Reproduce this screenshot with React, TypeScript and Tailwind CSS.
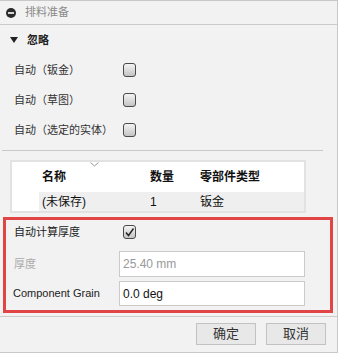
import React from 'react';

const FONT = { fontFamily: '"Liberation Sans", "Noto Sans CJK SC", sans-serif' };

function Box({ checked }: { checked?: boolean }) {
  return (
    <div className="w-[13px] h-[14px] rounded-[3px] border border-[#4a4a4a] bg-gradient-to-b from-[#f4f4f4] to-[#c4c4c4] flex items-center justify-center">
      {checked && (
        <svg width="11" height="11" viewBox="0 0 11 11">
          <path d="M2 5.5 L4.5 8.5 L9.5 1.5" fill="none" stroke="#222" strokeWidth="1.4" />
        </svg>
      )}
    </div>
  );
}

function CheckRow({ label }: { label: string }) {
  return (
    <div className="h-[30px] flex items-center">
      <span className="w-[123px] pl-[14px] text-[11px] text-[#333]">{label}</span>
      <Box />
    </div>
  );
}

export default function App() {
  return (
    <div style={FONT} className="w-[338px] h-[353px] bg-[#f2f2f2] border-t border-r border-b border-[#c8c8c8] flex flex-col">
      <div className="h-[24px] border-b border-[#cbcbcb] flex items-center pl-[6px] gap-[9px] shrink-0">
        <svg width="10" height="10" viewBox="0 0 10 10">
          <circle cx="5" cy="5" r="5" fill="#2b2b2b" />
          <rect x="2" y="4.2" width="6" height="1.6" fill="#fff" />
        </svg>
        <span className="text-[11px] text-[#8a8a8a]">排料准备</span>
      </div>

      <div className="h-[30px] flex items-center pl-[10px] gap-[9px] shrink-0">
        <svg width="8" height="6" viewBox="0 0 8 6">
          <path d="M0 0 H8 L4 6 Z" fill="#222" />
        </svg>
        <span className="text-[11px] font-bold text-[#222]">忽略</span>
      </div>

      <CheckRow label="自动（钣金）" />
      <CheckRow label="自动（草图）" />
      <CheckRow label="自动（选定的实体）" />

      <div className="mt-[5px] ml-[2px] w-[321px] h-px bg-[#c8c8c8] shrink-0" />

      <div className="mt-[9px] ml-[10px] w-[296px] h-[53px] border-2 border-[#e2e2e2] bg-white relative shrink-0 text-[12px] text-[#111]">
        <div className="h-[30px] flex items-center font-bold">
          <span className="w-[138px] pl-[30px]">名称</span>
          <span className="w-[50px]">数量</span>
          <span>零部件类型</span>
        </div>
        <svg className="absolute left-[78px] top-0" width="9" height="5" viewBox="0 0 9 5">
          <path d="M0.5 0.5 L4.5 4 L8.5 0.5" fill="none" stroke="#999" strokeWidth="1" />
        </svg>
        <div className="ml-[27px] h-[19px] bg-[#efefef] flex items-center">
          <span className="w-[111px] pl-[3px]">(未保存)</span>
          <span className="w-[50px]">1</span>
          <span>钣金</span>
        </div>
      </div>

      <div className="mt-[4px] ml-[3px] w-[330px] h-[96px] border-[3px] border-[#e04444] shrink-0 flex flex-col">
        <div className="h-[24px] flex items-center">
          <span className="w-[117px] pl-[8px] text-[11px] text-[#222]">自动计算厚度</span>
          <Box checked />
        </div>
        <div className="mt-[7px] h-[26px] flex items-center">
          <span className="w-[113px] pl-[8px] text-[11px] text-[#aaa]">厚度</span>
          <div className="w-[186px] h-[26px] bg-white border border-[#cacaca] flex items-center pl-[3px] text-[12px] text-[#999]">25.40 mm</div>
        </div>
        <div className="mt-[4px] h-[25px] flex items-center">
          <span className="w-[113px] pl-[7px] text-[11px] text-[#222]">Component Grain</span>
          <div className="w-[186px] h-[25px] bg-white border border-[#cacaca] flex items-center pl-[3px] text-[12px] text-[#111]">0.0 deg</div>
        </div>
      </div>

      <div className="mt-[3px] h-px bg-[#cbcbcb] shrink-0" />

      <div className="flex-1 flex items-center justify-end pr-[11px] gap-[10px] pb-[1px]">
        <button className="w-[60px] h-[22px] bg-[#e8e8e8] border border-[#c2c2c2] text-[13px] text-[#333]">确定</button>
        <button className="w-[60px] h-[22px] bg-[#e8e8e8] border border-[#c2c2c2] text-[13px] text-[#333]">取消</button>
      </div>
    </div>
  );
}
